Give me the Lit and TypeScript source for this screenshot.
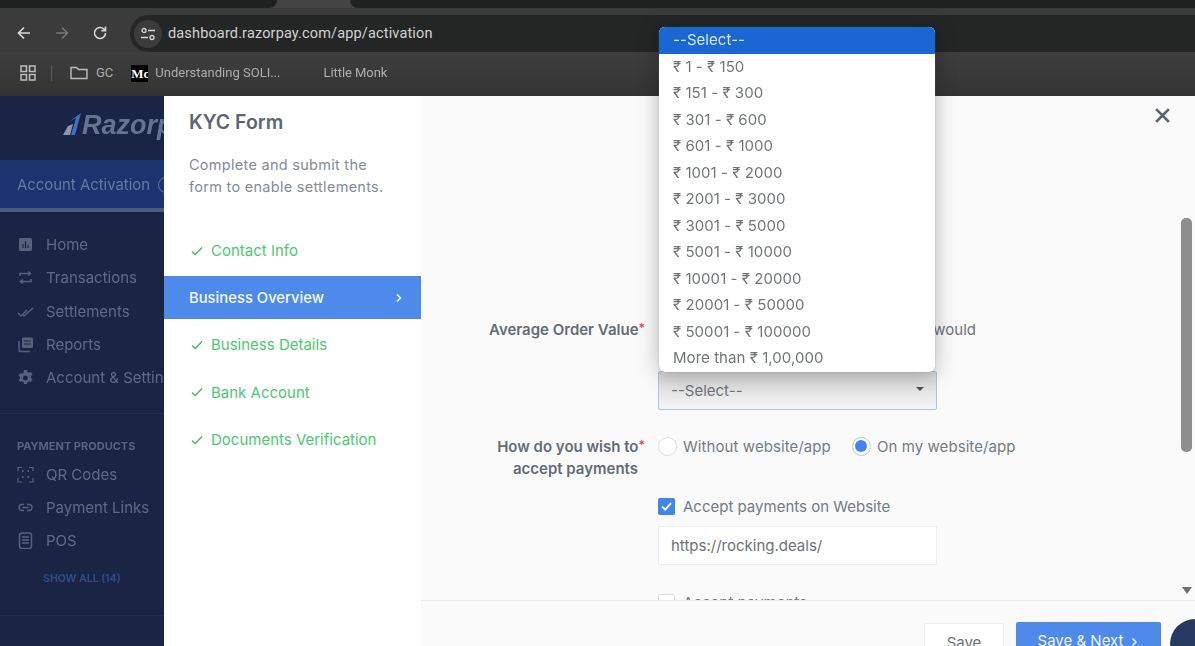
import { LitElement, html, css, svg } from 'lit';
import { customElement } from 'lit/decorators.js';

const OPTIONS = [
  '₹ 1 - ₹ 150', '₹ 151 - ₹ 300', '₹ 301 - ₹ 600', '₹ 601 - ₹ 1000',
  '₹ 1001 - ₹ 2000', '₹ 2001 - ₹ 3000', '₹ 3001 - ₹ 5000', '₹ 5001 - ₹ 10000',
  '₹ 10001 - ₹ 20000', '₹ 20001 - ₹ 50000', '₹ 50001 - ₹ 100000', 'More than ₹ 1,00,000',
];

const ICONS: Record<string, unknown> = {
  home: svg`<rect x="2" y="2" width="13" height="13" rx="1.5" fill="currentColor"/><path d="M6 12V8M8.500 12V5M11 12V9" stroke="#1a2545" stroke-width="1.200"/>`,
  tx: svg`<path d="M3 7V4.500h10M11 2.500l2.500 2-2.500 2M14 10v2.500H4M6 10.500l-2.500 2 2.500 2" fill="none" stroke="currentColor" stroke-width="1.500"/>`,
  settle: svg`<path d="M1 10l3 3 6-6M6 12l1 1 9-8" fill="none" stroke="currentColor" stroke-width="1.400"/>`,
  reports: svg`<rect x="5" y="1.500" width="11" height="10.500" rx="1.500" fill="currentColor"/><path d="M2 5v9.500a1 1 0 0 0 1 1h10" fill="none" stroke="currentColor" stroke-width="1.500"/><path d="M7 5h7M7 8h7" stroke="#1a2545" stroke-width="1.100"/>`,
  gear: svg`<path fill-rule="evenodd" fill="currentColor" d="M7 1h3l.5 2 1.500.8 2-.7 1.500 2.600-1.500 1.400v1.800l1.500 1.400-1.500 2.600-2-.7-1.500.8-.5 2H7l-.5-2-1.500-.8-2 .7-1.500-2.600L3 9.900V8.100L1.500 6.700 3 4.100l2 .7 1.500-.8zM8.500 6.500a2.500 2.500 0 1 0 0 5 2.500 2.500 0 0 0 0-5z"/>`,
  qr: svg`<path d="M1 5V1.500h4M12 1.500h4V5M16 12v4h-4M5 16H1v-4" fill="none" stroke="currentColor" stroke-width="1.200"/><path d="M5 5h1.500M10.500 5H12M5 11h1.500M10.500 11H12" stroke="currentColor" stroke-width="1.800"/>`,
  link: svg`<path d="M7 5.500H5a3 3 0 0 0 0 6h2M10 5.500h2a3 3 0 0 1 0 6h-2M5.500 8.500h6" fill="none" stroke="currentColor" stroke-width="1.400"/>`,
  pos: svg`<rect x="2.500" y="1" width="12" height="15.500" rx="2.500" fill="none" stroke="currentColor" stroke-width="1.500"/><path d="M5 5h7M5 8h7M5 11h7" stroke="currentColor" stroke-width="1.600"/>`,
};

const NAV_TOP = [
  ['home', 'Home'], ['tx', 'Transactions'], ['settle', 'Settlements'],
  ['reports', 'Reports'], ['gear', 'Account & Settings'],
];
const NAV_PRODUCTS = [['qr', 'QR Codes'], ['link', 'Payment Links'], ['pos', 'POS']];

const check = html`<svg class="check" viewBox="0 0 14 14"><path d="M2 7.500l3.200 3L12 3.500" fill="none" stroke="currentColor" stroke-width="1.500"/></svg>`;

@customElement('app-root')
export class AppRoot extends LitElement {
  static styles = css`
    :host {
      display: block;
      width: 1195px;
      height: 646px;
      overflow: hidden;
      font-family: Inter, 'Noto Sans', sans-serif;
    }
    .root { position: relative; width: 1195px; height: 646px; overflow: hidden; filter: blur(0.45px); }

    /* browser chrome */
    .tabs { display: flex; height: 8px; background: #444; }
    .tab-a { width: 277px; background: #1f2120; border-radius: 0 0 10px 0; }
    .tab-b { flex: 1; margin-left: 73px; background: #1f2120; border-radius: 0 0 0 10px; }
    .toolbar { display: flex; height: 44px; background: #3b3b3b; padding-top: 7px; box-sizing: border-box; }
    .nav-btns { width: 130px; display: flex; align-items: center; padding-left: 16px; box-sizing: border-box; gap: 22px; margin-top: -2px; }
    .nav-btns svg { width: 16px; height: 16px; color: #d8d8d8; }
    .nav-btns svg.off { color: #777; }
    .omni { flex: 1; display: flex; align-items: center; background: #242626; border-radius: 19px 0 0 19px; font: 14.500px/20px Roboto, sans-serif; color: #d2d2d2; letter-spacing: 0.15px; }
    .site { width: 28px; height: 28px; border-radius: 50%; background: #3b3b3b; display: flex; align-items: center; justify-content: center; margin: 0 6px 0 4px; }
    .site svg { width: 16px; height: 16px; color: #d6d6d6; }
    .bookmarks { display: flex; align-items: center; height: 44px; padding-bottom: 2px; background: linear-gradient(#3e3e3e, #343434); font: 13px/16px Roboto, sans-serif; color: #aeaeae; padding-left: 20px; box-sizing: border-box; }
    .bookmarks svg { color: #bdbdbd; flex: none; }
    .sep { width: 1px; height: 16px; background: #5c5c5c; margin: 0 18px 0 15px; }
    .gc { margin: 0 18px 0 8px; }
    .medium { width: 17px; height: 17px; background: #000; color: #fff; font: bold 13px/17px 'Liberation Serif', serif; text-align: center; margin-right: 7px; overflow: hidden; }
    .monk { margin-left: 43px; letter-spacing: -0.05px; }

    .page { display: flex; height: 550px; }

    /* sidebar */
    .sidebar { width: 164px; flex: none; background: #1a2545; overflow: hidden; color: #5f6b84; font-size: 15px; white-space: nowrap; }
    .logo { height: 64px; display: flex; align-items: center; padding: 0 0 6px 62px; box-sizing: border-box; color: #65748f; font: italic bold 27px/30px 'Liberation Sans', sans-serif; }
    .logo svg { width: 20px; height: 25px; flex: none; margin-top: -2px; }
    .activation { height: 52px; display: flex; align-items: center; padding: 1px 0 0 17px; background: #1b336f; border-bottom: 4px solid #4a5a80; box-sizing: border-box; color: #66799f; gap: 8px; font-size: 14.900px; }
    .activation i { width: 14px; height: 14px; border: 1.500px solid #66799f; border-radius: 50%; flex: none; }
    .group { padding: 16px 0 19px; border-bottom: 1px solid #212d50; }
    .item { display: flex; align-items: center; gap: 12px; height: 33.300px; padding-left: 17px; }
    .item svg { width: 17px; height: 17px; flex: none; color: #56627c; }
    .group-title { font-size: 11px; font-weight: 700; line-height: 16px; padding: 24px 0 3px 17px; color: #566280; }
    .show { font-size: 10.500px; font-weight: 700; color: #2c4a86; padding: 14px 0 28px 43px; line-height: 16px; }
    .group.end { padding: 0; }

    /* kyc steps panel */
    .kyc { width: 257px; flex: none; background: #fff; }
    .kyc h2 { margin: 0; padding: 14px 0 0 25px; font-size: 19.500px; line-height: 24px; font-weight: 600; color: #5a6672; }
    .kyc p { margin: 0; padding: 20px 20px 0 25px; font-size: 14.500px; line-height: 22px; color: #828b94; letter-spacing: 0.28px; }
    .steps { padding-top: 29px; }
    .step { display: flex; align-items: center; height: 47.300px; padding-left: 26px; gap: 7px; color: #4cc870; font-size: 15px; font-weight: 400; white-space: nowrap; }
    .check { width: 14px; height: 14px; flex: none; color: #48b868; }
    .step.active { height: 43px; margin: 2px 0; padding: 0 17px 0 25px; background: #4e8aea; color: #f4f8ff; justify-content: space-between; font-weight: 500; font-size: 14.800px; }
    .step.active svg { width: 10px; height: 10px; }

    /* form */
    .main { flex: 1; min-width: 0; display: flex; flex-direction: column; background: #fafafa; position: relative; }
    .scroller { height: 504px; display: flex; overflow: hidden; }
    .form { flex: 1; min-width: 0; padding: 222px 0 0; }
    .row { display: grid; grid-template-columns: 217px 318px; column-gap: 20px; }
    .label { text-align: right; font-size: 15px; line-height: 22px; font-weight: 600; color: #636c75; margin-top: -1px; }
    .label b { font-weight: 600; color: #e2474f; font-size: 12px; margin-right: -7px; vertical-align: 3px; }
    .help { text-align: right; white-space: nowrap; font-size: 15px; line-height: 24px; color: #6d7278; margin-bottom: 29px; overflow: hidden; }
    .field { box-sizing: border-box; width: 279px; height: 39px; display: flex; align-items: center; padding: 0 12px; font-size: 15px; color: #6d7278; background: #fff; border: 1px solid #ecedee; }
    .field.sel { justify-content: space-between; border: 1px solid #a9c4ee; background: linear-gradient(#d6d6d6, #ececec 70%, #f5f5f5); border-radius: 2px; }
    .caret { width: 0; height: 0; border: 4px solid transparent; border-top: 4px solid #4a4f55; border-bottom: 0; margin: -3px 0 0; }
    .pay { margin-top: 25px; }
    .radios { display: flex; align-items: center; gap: 21px; height: 22px; font-size: 15px; color: #757b82; white-space: nowrap; letter-spacing: 0.08px; }
    .radio-opt { display: flex; align-items: center; gap: 6px; }
    .radio { width: 19px; height: 19px; box-sizing: border-box; border-radius: 50%; border: 1px solid #dcdee0; background: #fff; }
    .radio.on { border-color: #aecbf3; padding: 2.500px; }
    .radio.on::before { content: ''; display: block; width: 12px; height: 12px; border-radius: 50%; background: #4285e8; }
    .checks { margin-top: 15px; grid-column: 2; }
    .cb-row { display: flex; align-items: center; gap: 8px; height: 22px; font-size: 15px; color: #757b82; white-space: nowrap; }
    .cb { width: 17px; height: 17px; border-radius: 2px; background: #4285e8; color: #fff; flex: none; display: flex; }
    .cb svg { width: 17px; height: 17px; }
    .cb.off { background: #fff; border: 1px solid #dcdee0; box-sizing: border-box; }
    .url { margin: 9px 0 26px; }

    .track { width: 16px; flex: none; display: flex; flex-direction: column; padding: 0 2px 6px 1px; box-sizing: border-box; align-items: center; }
    .thumb { width: 11px; height: 234px; margin-top: 122px; background: #8e8e8e; border-radius: 5px; }
    .down { margin-top: auto; width: 0; height: 0; border: 5px solid transparent; border-top: 7px solid #6e6e6e; border-bottom: 0; }

    .footer { height: 46px; display: flex; justify-content: flex-end; align-items: flex-start; gap: 12px; padding: 21px 34px 0 0; box-sizing: border-box; border-top: 1px solid #e8e8e8; background: #fafafa; }
    .btn { box-sizing: border-box; height: 40px; display: flex; align-items: flex-start; justify-content: center; padding-top: 9px; font-size: 15px; line-height: 20px; flex: none; border-radius: 2px; }
    .btn.save { width: 80px; background: #fff; border: 1px solid #eeeeee; color: #6d7278; margin-top: 1px; }
    .btn.next { width: 145px; background: #4e8aea; color: #f0f5ff; gap: 7px; }
    .btn.next svg { width: 9px; height: 10px; margin-top: 6px; }

    /* floating bits over the page */
    .close { position: absolute; left: 733px; top: 11px; width: 17px; height: 17px; color: #5b646d; }
    .chat { position: absolute; left: 749px; top: 523px; width: 50px; height: 50px; border-radius: 50%; background: #27395f; }
    .dropdown {
      position: absolute; left: 659px; top: 27px; width: 276px; box-sizing: border-box;
      background: #fff; border-radius: 6px; overflow: hidden; font-size: 15px; color: #717579;
      letter-spacing: 0.05px; box-shadow: 0 0 1px #777, 0 3px 22px rgba(0, 0, 0, 0.28);
    }
    .opt { height: 26.500px; line-height: 26px; padding-left: 14px; white-space: nowrap; }
    .opt.current { background: #1a66d2; color: #d5e6ff; }
  `;

  render() {
    return html`
      <div class="root">
        <div class="tabs"><div class="tab-a"></div><div class="tab-b"></div></div>
        ${this.renderToolbar()}
        ${this.renderBookmarks()}
        <div class="page">
          ${this.renderSidebar()}
          ${this.renderKyc()}
          ${this.renderMain()}
        </div>
        <div class="dropdown">
          <div class="opt current">--Select--</div>
          ${OPTIONS.map((o) => html`<div class="opt">${o}</div>`)}
        </div>
      </div>
    `;
  }

  renderToolbar() {
    return html`
      <div class="toolbar">
        <div class="nav-btns">
          <svg viewBox="0 0 16 16"><path d="M14 8H2.500M8 2.500L2.500 8 8 13.500" fill="none" stroke="currentColor" stroke-width="1.700"/></svg>
          <svg class="off" viewBox="0 0 16 16"><path d="M2 8h11.500M8 2.500L13.500 8 8 13.500" fill="none" stroke="currentColor" stroke-width="1.500"/></svg>
          <svg viewBox="0 0 16 16"><path d="M13.500 8a5.500 5.500 0 1 1-1.600-3.900L13.500 5.700M13.500 1.500v4.200H9.300" fill="none" stroke="currentColor" stroke-width="1.600"/></svg>
        </div>
        <div class="omni">
          <div class="site">
            <svg viewBox="0 0 16 16"><circle cx="4" cy="4.500" r="2" fill="none" stroke="currentColor" stroke-width="1.300"/><path d="M8 4.500h7M1 11.500h7" stroke="currentColor" stroke-width="1.500"/><circle cx="12" cy="11.500" r="2" fill="none" stroke="currentColor" stroke-width="1.300"/></svg>
          </div>
          dashboard.razorpay.com/app/activation
        </div>
      </div>
    `;
  }

  renderBookmarks() {
    return html`
      <div class="bookmarks">
        <svg width="16" height="16" viewBox="0 0 16 16"><path d="M1 1h5.500v5.500H1zM9.500 1H15v5.500H9.500zM1 9.500h5.500V15H1zM9.500 9.500H15V15H9.500z" fill="none" stroke="currentColor" stroke-width="1.500"/></svg>
        <div class="sep"></div>
        <svg width="18" height="14" viewBox="0 0 18 14"><path d="M1 12.500V1.500h5.500l2 2H17v9z" fill="none" stroke="currentColor" stroke-width="1.400"/></svg>
        <span class="gc">GC</span>
        <div class="medium">Mc</div>
        <span>Understanding SOLI...</span>
        <span class="monk">Little Monk</span>
      </div>
    `;
  }

  renderSidebar() {
    const item = ([icon, label]: string[]) => html`
      <div class="item"><svg viewBox="0 0 17 17">${ICONS[icon]}</svg>${label}</div>
    `;
    return html`
      <aside class="sidebar">
        <div class="logo">
          <svg viewBox="0 0 20 25"><path d="M1 23l5-9 5-2-3 11z" fill="#8b97ab"/><path d="M8 9l11-8-6 22H9l5-17z" fill="#3e6fc4"/></svg>
          <span>Razorpay</span>
        </div>
        <div class="activation">Account Activation <i></i></div>
        <div class="group">${NAV_TOP.map(item)}</div>
        <div class="group-title">PAYMENT PRODUCTS</div>
        ${NAV_PRODUCTS.map(item)}
        <div class="show">SHOW ALL (14)</div>
        <div class="group end"></div>
      </aside>
    `;
  }

  renderKyc() {
    return html`
      <section class="kyc">
        <h2>KYC Form</h2>
        <p>Complete and submit the form to enable settlements.</p>
        <div class="steps">
          <div class="step">${check}Contact Info</div>
          <div class="step active">Business Overview
            <svg viewBox="0 0 10 10"><path d="M3 1.500L6.500 5 3 8.500" fill="none" stroke="currentColor" stroke-width="1.600"/></svg>
          </div>
          <div class="step">${check}Business Details</div>
          <div class="step">${check}Bank Account</div>
          <div class="step">${check}Documents Verification</div>
        </div>
      </section>
    `;
  }

  renderMain() {
    return html`
      <section class="main">
        <div class="scroller">
          <div class="form">
            <div class="row">
              <div class="label">Average Order Value<b>*</b></div>
              <div>
                <div class="help">Select the amount a customer would</div>
                <div class="field sel">--Select--<span class="caret"></span></div>
              </div>
            </div>
            <div class="row pay">
              <div class="label">How do you wish to<b>*</b><br />accept payments</div>
              <div class="radios">
                <span class="radio-opt"><span class="radio"></span>Without website/app</span>
                <span class="radio-opt"><span class="radio on"></span>On my website/app</span>
              </div>
            </div>
            <div class="row">
              <div class="checks">
                <div class="cb-row">
                  <span class="cb"><svg viewBox="0 0 17 17"><path d="M4 8.500l3.200 3.200L13 5.200" fill="none" stroke="currentColor" stroke-width="1.800"/></svg></span>
                  Accept payments on Website
                </div>
                <div class="field url">https://rocking.deals/</div>
                <div class="cb-row"><span class="cb off"></span>Accept payments</div>
              </div>
            </div>
          </div>
          <div class="track"><div class="thumb"></div><div class="down"></div></div>
        </div>
        <div class="footer">
          <div class="btn save">Save</div>
          <div class="btn next">Save &amp; Next
            <svg viewBox="0 0 9 10"><path d="M2.500 1.500L6 5 2.500 8.500" fill="none" stroke="currentColor" stroke-width="1.500"/></svg>
          </div>
        </div>
        <svg class="close" viewBox="0 0 16 16"><path d="M2 2l12 12M14 2L2 14" fill="none" stroke="currentColor" stroke-width="2.500"/></svg>
        <div class="chat"></div>
      </section>
    `;
  }
}
